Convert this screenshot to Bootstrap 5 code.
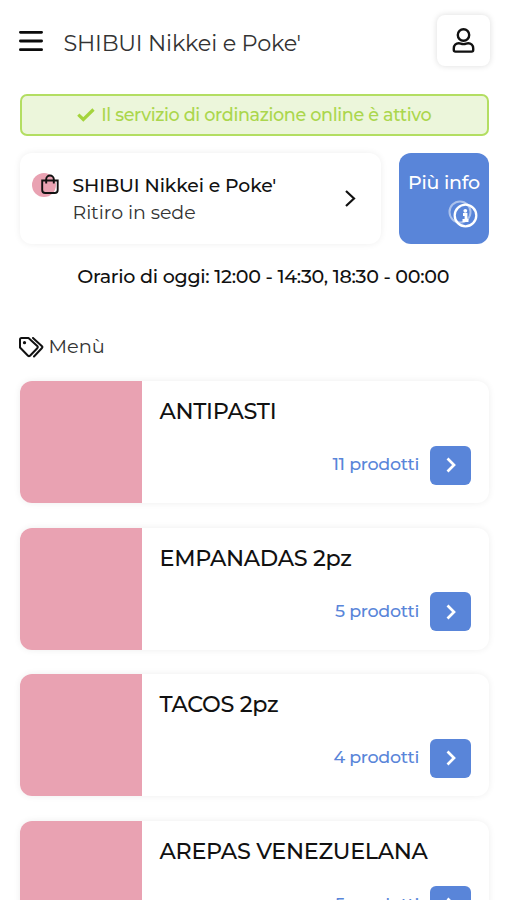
<!DOCTYPE html>
<html lang="it">
<head>
<meta charset="utf-8">
<meta name="viewport" content="width=device-width, initial-scale=1">
<title>SHIBUI Nikkei e Poke'</title>
<link rel="stylesheet" href="https://cdn.jsdelivr.net/npm/bootstrap@5.3.0/dist/css/bootstrap.min.css">
<style>
html{overflow:hidden}
body{font-family:Montserrat,Inter,sans-serif;color:#111;background:#fff;height:900px;overflow:hidden;line-height:1.2}
.page{padding:15px 18px 0 19.5px}
.soft{box-shadow:0 0 7px rgba(0,0,0,.07)}
.topbar{height:51px}
.brand-name{font-size:22.4px;font-weight:400;margin-left:21px;padding-top:5px;color:#333;letter-spacing:-.2px}
.bars{margin-left:-1px}
.user-btn{width:53px;height:51px;margin-right:-1px;border-radius:8px;background:#fff;box-shadow:0 0 6px rgba(0,0,0,.14)}
.online{margin-top:28px;height:42px;border:2px solid #b3de62;border-radius:7px;background:#ecf6db;color:#abd64d;font-size:17.6px;font-weight:500;gap:6px;letter-spacing:-.36px}
.info-row{margin-top:17px}
.place{height:91px;width:361px;border-radius:12px;padding:20px 25px 0 11px}
.place-name{font-size:18.8px;font-weight:500;line-height:25px;letter-spacing:-.1px}
.place-type{font-size:19px;font-weight:400;line-height:30px;color:#333;letter-spacing:-.05px}
.more{width:90px;height:91px;border-radius:12px;background:#5985d9;color:#fff;font-size:19px;font-weight:500;padding:19px 11px 0 9px;letter-spacing:-.25px}
.info-icon{margin-top:5px}
.hours{font-size:19.1px;font-weight:500;margin-top:20px;padding-left:18px;line-height:25px;letter-spacing:-.28px;white-space:nowrap}
.menu-title{margin-top:46px;height:24px;font-size:19.4px;font-weight:400;color:#333;gap:5px}
.menu-title svg{margin-left:-1px}
.menu-list{margin-top:22px;gap:24.7px}
.dish{height:122px;border-radius:12px;overflow:hidden}
.thumb{width:122px;background:#e9a2b2}
.dish-body{padding:17px 18px 18.5px}
.dish-name{font-size:22.3px;font-weight:500;line-height:26px;letter-spacing:-.3px}
.count{font-size:17.5px;font-weight:500;color:#5985d9;letter-spacing:-.3px;padding-bottom:3px}
.go{width:41px;height:39px;margin-left:11px;border-radius:6px;background:#5985d9}
</style>
</head>
<body>
<svg class="d-none"><symbol id="chev" viewBox="0 0 10 16"><path d="m1.500 1.500 6.500 6.500-6.500 6.500" fill="none" stroke="#fff" stroke-width="2.700"/></symbol></svg>
<main class="page">
<header class="topbar d-flex align-items-center">
<svg class="bars" width="24" height="22" viewBox="0 0 24 22" stroke="#0b0b0b" stroke-width="2.800" stroke-linecap="round"><path d="M1.400 2.300h21.200M1.400 11h21.200M1.400 19.700h21.200"/></svg>
<div class="brand-name">SHIBUI Nikkei e Poke'</div>
<div class="user-btn ms-auto d-flex align-items-center justify-content-center">
<svg width="24" height="26" viewBox="0 0 24 26" fill="none" stroke="#111" stroke-width="2.400"><circle cx="11.500" cy="7" r="5.700"/><path d="M1.800 22v-1.700c0-3.100 2.200-5 5-5 1.700 0 2.300.8 4.700.8s3-.8 4.700-.8c2.800 0 5 1.900 5 5v1.700c0 1-.6 1.600-1.600 1.600H3.400c-1 0-1.600-.6-1.600-1.600z"/></svg>
</div>
</header>
<div class="online d-flex align-items-center justify-content-center">
<svg width="18" height="14" viewBox="0 0 18 14" fill="none" stroke="#a4d43c" stroke-width="3.200"><path d="M1.300 6.700 6.300 11.500 16.500 1.500"/></svg>
<span>Il servizio di ordinazione online è attivo</span></div>
<div class="info-row d-flex justify-content-between">
<div class="place soft d-flex">
<svg width="30" height="26" viewBox="0 0 30 26" fill="none"><circle cx="13" cy="12" r="12" fill="#e9a2b2"/><g stroke="#111" stroke-width="1.900"><path d="M11.200 7.500h15.500v9.500q0 3-3 3h-9.500q-3 0-3-3z"/><path d="M15.200 10.500V6.300a3.800 3.800 0 0 1 7.600 0v4.200"/></g></svg>
<div class="ms-2 ps-1"><div class="place-name">SHIBUI Nikkei e Poke'</div><div class="place-type">Ritiro in sede</div></div>
<svg class="ms-auto mt-3" width="12" height="19" viewBox="0 0 12 19" fill="none" stroke="#111" stroke-width="2.200"><path d="m2 2 8 7.500L2 17"/></svg>
</div>
<div class="more d-flex flex-column">
<span class="text-nowrap">Più info</span>
<svg class="info-icon align-self-end" width="30" height="30" viewBox="0 0 30 30" fill="none" stroke="#fff"><circle cx="12" cy="12" r="10.500" stroke-opacity=".5" stroke-width="2"/><circle cx="17.500" cy="15.500" r="10.800" stroke-width="2.300"/><path d="M15 14.500h3V20M14.500 20.500h6" stroke-width="2.800"/><circle cx="17.300" cy="10.800" r="1.900" fill="#fff" stroke="none"/></svg>
</div>
</div>
<div class="hours text-center">Orario di oggi: 12:00 - 14:30, 18:30 - 00:00</div>
<div class="menu-title d-flex align-items-center">
<svg width="25" height="21" viewBox="0 0 25 21" fill="none" stroke="#111" stroke-width="2" stroke-linejoin="round" stroke-linecap="round"><path d="M1 2.500Q1 1 2.500 1H9.500L18.500 9.200Q19.300 10 18.500 11L11 18.700Q10 19.500 9 18.700L1 10.500z"/><path d="M14 1l9 8.200q.8.800 0 1.800L15 19.500"/><circle cx="5.500" cy="5.700" r="1.600" fill="#111" stroke="none"/></svg>
<span>Menù</span></div>
<div class="menu-list d-flex flex-column">
<div class="dish soft d-flex flex-shrink-0"><div class="thumb flex-shrink-0"></div><div class="dish-body flex-grow-1 d-flex flex-column justify-content-between"><div class="dish-name">ANTIPASTI</div><div class="d-flex align-items-center justify-content-end"><span class="count">11 prodotti</span><span class="go d-flex align-items-center justify-content-center"><svg width="10" height="16"><use href="#chev"/></svg></span></div></div></div>
<div class="dish soft d-flex flex-shrink-0"><div class="thumb flex-shrink-0"></div><div class="dish-body flex-grow-1 d-flex flex-column justify-content-between"><div class="dish-name">EMPANADAS 2pz</div><div class="d-flex align-items-center justify-content-end"><span class="count">5 prodotti</span><span class="go d-flex align-items-center justify-content-center"><svg width="10" height="16"><use href="#chev"/></svg></span></div></div></div>
<div class="dish soft d-flex flex-shrink-0"><div class="thumb flex-shrink-0"></div><div class="dish-body flex-grow-1 d-flex flex-column justify-content-between"><div class="dish-name">TACOS 2pz</div><div class="d-flex align-items-center justify-content-end"><span class="count">4 prodotti</span><span class="go d-flex align-items-center justify-content-center"><svg width="10" height="16"><use href="#chev"/></svg></span></div></div></div>
<div class="dish soft d-flex flex-shrink-0"><div class="thumb flex-shrink-0"></div><div class="dish-body flex-grow-1 d-flex flex-column justify-content-between"><div class="dish-name">AREPAS VENEZUELANA</div><div class="d-flex align-items-center justify-content-end"><span class="count">5 prodotti</span><span class="go d-flex align-items-center justify-content-center"><svg width="10" height="16"><use href="#chev"/></svg></span></div></div></div>
</div>
</main>
<script src="https://cdn.jsdelivr.net/npm/bootstrap@5.3.0/dist/js/bootstrap.bundle.min.js"></script>
</body>
</html>
